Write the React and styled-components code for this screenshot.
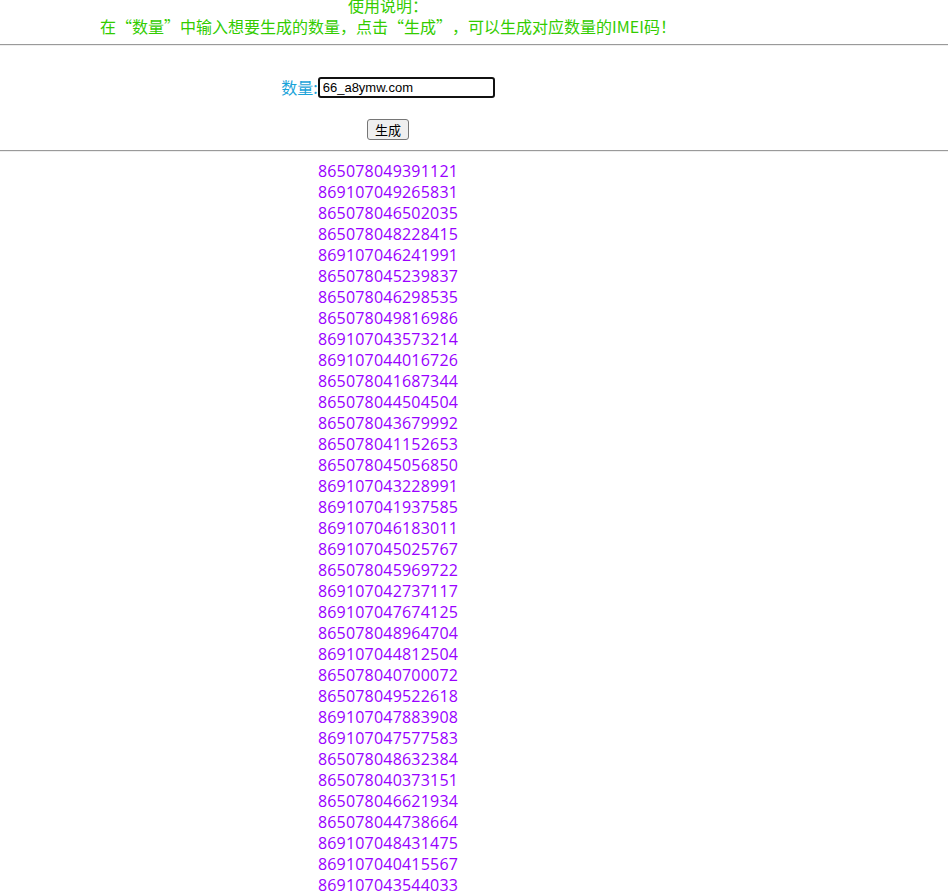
import React from "react";
import styled, { createGlobalStyle } from "styled-components";

const Global = createGlobalStyle`
  html, body { margin: 0; padding: 0; background: #fff; }
  body { font-family: "Noto Sans CJK SC", "Noto Sans", sans-serif; font-size: 16px; overflow: hidden; }
`;

const Page = styled.div`
  width: 948px;
`;

const Centered = styled.div`
  width: 776px;
  text-align: center;
`;

const Header = styled(Centered)`
  margin-top: -5px;
  color: #33cc00;
  font-size: 16px;
  line-height: 21px;
  text-spacing-trim: space-all;
`;

const Line = styled.div``;

const Rule = styled.hr`
  margin: ${(p) => p.$top}px 0 0;
  border: 0;
  border-top: 1px solid #9a9a9a;
  border-bottom: 1px solid #eeeeee;
  height: 0;
`;

const FormRow = styled(Centered)`
  margin-top: ${(p) => p.$top}px;
  height: ${(p) => p.$h}px;
  display: flex;
  justify-content: center;
  align-items: center;
`;

const Label = styled.label`
  color: #1aa3d9;
  font-size: 16px;
  line-height: 22px;
`;

const Input = styled.input`
  box-sizing: border-box;
  width: 177px;
  height: 21px;
  margin: 0;
  padding: 0 3px;
  border: 2px solid #111;
  border-radius: 3px;
  font-family: "Liberation Sans", Arial, sans-serif;
  font-size: 13px;
  color: #000;
  outline: none;
`;

const Button = styled.button`
  box-sizing: border-box;
  width: 42px;
  height: 21px;
  padding: 0;
  border: 1px solid #767676;
  border-radius: 3px;
  background: #efefef;
  font-family: "Noto Sans CJK SC", sans-serif;
  font-size: 13px;
  line-height: 19px;
  color: #000;
`;

const List = styled(Centered)`
  margin-top: 9px;
  color: #9900ff;
  font-family: "Open Sans", "Noto Sans", sans-serif;
  font-size: 16px;
  line-height: 21px;
  letter-spacing: 0.2px;
`;

const Num = styled.div``;

const numbers = [
  "865078049391121","869107049265831","865078046502035","865078048228415","869107046241991",
  "865078045239837","865078046298535","865078049816986","869107043573214","869107044016726",
  "865078041687344","865078044504504","865078043679992","865078041152653","865078045056850",
  "869107043228991","869107041937585","869107046183011","869107045025767","865078045969722",
  "869107042737117","869107047674125","865078048964704","869107044812504","865078040700072",
  "865078049522618","869107047883908","869107047577583","865078048632384","865078040373151",
  "865078046621934","865078044738664","869107048431475","869107040415567","869107043544033",
];

export default function App() {
  return (
    <Page>
      <Global />
      <Header>
        <Line>使用说明：</Line>
        <Line>在“数量”中输入想要生成的数量，点击“生成”，可以生成对应数量的IMEI码！</Line>
      </Header>
      <Rule $top={7} />
      <FormRow $top={30} $h={22}>
        <Label htmlFor="num">数量:</Label>
        <Input id="num" defaultValue="66_a8ymw.com" />
      </FormRow>
      <FormRow $top={21} $h={21}>
        <Button type="button">生成</Button>
      </FormRow>
      <Rule $top={10} />
      <List>
        {numbers.map((n) => (
          <Num key={n}>{n}</Num>
        ))}
      </List>
    </Page>
  );
}
